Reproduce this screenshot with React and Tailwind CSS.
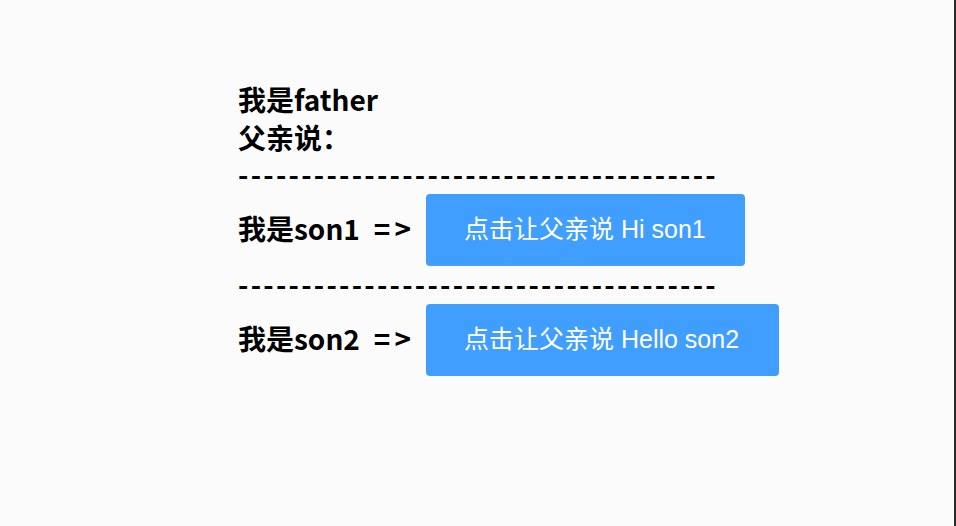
const SONS = [
  { name: "我是son1", say: "点击让父亲说 Hi son1", width: "w-[319px]" },
  { name: "我是son2", say: "点击让父亲说 Hello son2", width: "w-[353px]" },
];

const DASHES = "-".repeat(38);

function Dashes() {
  return (
    <div className="h-[38px] text-[28px] font-bold leading-[36px] tracking-[2.27px] text-black">
      {DASHES}
    </div>
  );
}

export default function App() {
  return (
    <div
      className="min-h-screen border-r-2 border-[#2b2b2b] bg-[#fbfbfb]"
      style={{ fontFamily: '"Noto Sans CJK SC", "Noto Sans", sans-serif' }}
    >
      <div className="flex flex-col pl-[238px] pt-[80px]">
        <div className="text-[28px] font-bold leading-[38px] text-black">
          <p>我是father</p>
          <p>父亲说：</p>
        </div>

        {SONS.map((son) => (
          <div key={son.name} className="flex flex-col">
            <Dashes />
            <div className="flex items-center">
              <div className="flex w-[188px] items-center pb-[4px] text-[28px] font-bold text-black">
                <span>{son.name}</span>
                <span className="ml-[14px] tracking-[4px]">=&gt;</span>
              </div>
              <button
                className={`h-[72px] ${son.width} rounded-[4px] bg-[#409eff] pl-[38px] text-left text-[25px] text-white`}
                style={{ fontFamily: '"Liberation Sans", "Noto Sans CJK SC", sans-serif' }}
              >
                {son.say}
              </button>
            </div>
          </div>
        ))}
      </div>
    </div>
  );
}
